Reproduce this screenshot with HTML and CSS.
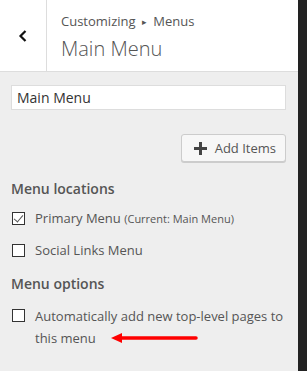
FILE: index.html
```html
<!DOCTYPE html>
<html lang="en">
<head>
    <meta charset="UTF-8">
    <title>Customizing Menus</title>
    <link rel="stylesheet" href="styles.css">
</head>
<body>
    <div class="panel">
        <div class="header">
            <button class="back-btn" type="button" aria-label="Back">
                <svg width="10" height="14" viewBox="0 0 10 14">
                    <path d="M7.5 2 L2.5 7 L7.5 12" fill="none" stroke="#111" stroke-width="2.2"/>
                </svg>
            </button>
            <div class="title">
                <span class="crumb">Customizing <span class="sep">&#9656;</span> Menus</span>
                <h1>Main Menu</h1>
            </div>
        </div>

        <div class="content">
            <input type="text" class="name-input" value="Main Menu">

            <div class="actions">
                <button type="button" class="add-btn">
                    <span class="plus"></span>
                    Add Items
                </button>
            </div>

            <h3 class="locations">Menu locations</h3>
            <label class="check-row">
                <span class="box checked"></span>
                <span>Primary Menu <small>(Current: Main Menu)</small></span>
            </label>
            <label class="check-row">
                <span class="box"></span>
                <span>Social Links Menu</span>
            </label>

            <h3 class="options">Menu options</h3>
            <label class="check-row multi">
                <span class="box"></span>
                <span class="long">Automatically add new top-level pages to this menu
                    <svg class="arrow" width="90" height="12" viewBox="0 0 90 12">
                        <path d="M86 6 L12 6" stroke="#f00" stroke-width="3.5" stroke-linecap="round"/>
                        <path d="M1 6 L12 1 L12 11 Z" fill="#f00"/>
                    </svg>
                </span>
            </label>
        </div>
    </div>
    <div class="strip"></div>
</body>
</html>
```

FILE: styles.css
```css
* {
    margin: 0;
    padding: 0;
    box-sizing: border-box;
}

body {
    font-family: 'Open Sans', 'Noto Sans', sans-serif;
    display: flex;
    height: 371px;
    overflow: hidden;
    color: #555;
}

.panel {
    width: 298px;
    height: 100%;
    background: #eee;
}

.strip {
    flex: 1;
    background: #222;
}

.header {
    display: flex;
    height: 72px;
    background: #fff;
    border-bottom: 1px solid #ddd;
}

.back-btn {
    width: 47px;
    border: none;
    border-right: 1px solid #ddd;
    background: #fff;
    display: flex;
    align-items: center;
    justify-content: center;
}

.title {
    padding: 11px 0 0 14px;
}

.crumb {
    display: block;
    font-size: 13px;
    line-height: 20px;
}

.crumb .sep {
    font-size: 9px;
    vertical-align: 1px;
    margin: 0 3px;
}

.title h1 {
    font-size: 20px;
    font-weight: 300;
    line-height: 30px;
    margin-top: 2px;
}

.content {
    padding: 13px 12px 0 11px;
}

.name-input {
    width: 275px;
    height: 25px;
    border: 1px solid #ddd;
    background: #fff;
    font-family: inherit;
    font-size: 14px;
    color: #333;
    padding: 0 5px;
    outline: none;
}

.actions {
    display: flex;
    justify-content: flex-end;
    margin-top: 24px;
}

.add-btn {
    display: flex;
    align-items: center;
    gap: 8px;
    height: 28px;
    padding: 0 9px 0 12px;
    font-family: inherit;
    font-size: 13px;
    color: #555;
    background: #f7f7f7;
    border: 1px solid #ccc;
    border-radius: 3px;
    box-shadow: 0 1px 0 #ccc;
}

.plus {
    position: relative;
    width: 13px;
    height: 13px;
}

.plus::before,
.plus::after {
    content: '';
    position: absolute;
    background: #444;
}

.plus::before {
    left: 0;
    top: 5px;
    width: 13px;
    height: 3px;
}

.plus::after {
    left: 5px;
    top: 0;
    width: 3px;
    height: 13px;
}

h3 {
    font-size: 14px;
    font-weight: 600;
    line-height: 20px;
}

h3.locations {
    margin: 17px 0 8px;
}

h3.options {
    margin: 13px 0 11px;
}

.check-row {
    display: flex;
    align-items: center;
    gap: 10px;
    font-size: 13px;
    line-height: 22px;
    margin-bottom: 9px;
    padding-left: 1px;
}

.check-row small {
    font-size: 11px;
}

.box {
    flex: none;
    position: relative;
    width: 13px;
    height: 13px;
    border: 1px solid #333;
    background: #fff;
}

.box.checked::after {
    content: '';
    position: absolute;
    left: 3px;
    top: 0;
    width: 4px;
    height: 8px;
    border: solid #555;
    border-width: 0 1.5px 1.5px 0;
    transform: rotate(40deg);
}

.check-row.multi {
    align-items: flex-start;
}

.check-row.multi .box {
    margin-top: 4px;
}

.long {
    position: relative;
}

.arrow {
    position: absolute;
    left: 75px;
    top: 27px;
}
```
